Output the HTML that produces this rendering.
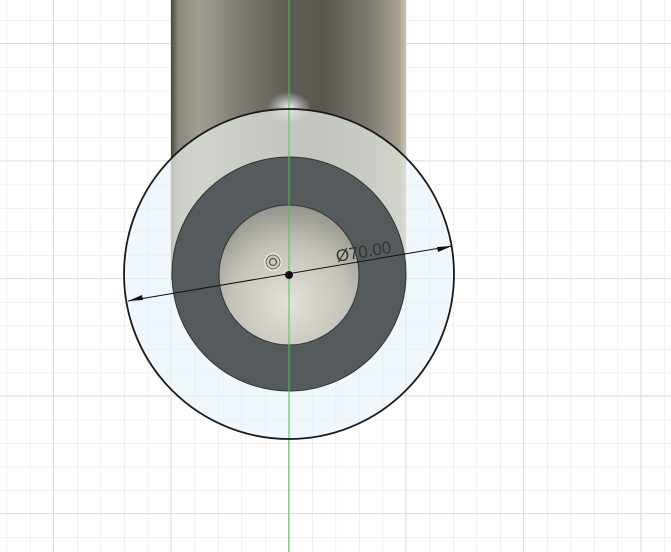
<!DOCTYPE html>
<html><head><style>html,body{margin:0;padding:0;background:#fff;overflow:hidden}</style></head>
<body>
<svg width="671" height="552" viewBox="0 0 671 552" xmlns="http://www.w3.org/2000/svg" style="display:block">
<defs>
<pattern id="minor" width="23.5" height="23.5" patternUnits="userSpaceOnUse" x="6.5" y="-3.5">
<path d="M0 0H23.5M0 0V23.5" stroke="#e8e8e8" stroke-width="1.3" fill="none"/>
</pattern>
<pattern id="major" width="117.5" height="117.5" patternUnits="userSpaceOnUse" x="53" y="43">
<path d="M0 0H117.5M0 0V117.5" stroke="#d2d2d2" stroke-width="1" fill="none"/>
</pattern>
<linearGradient id="cyl" x1="0" x2="1" y1="0" y2="0">
<stop offset="0" stop-color="#4a4740"/>
<stop offset="0.03" stop-color="#8a867c"/>
<stop offset="0.12" stop-color="#a29e94"/>
<stop offset="0.3" stop-color="#7e7a72"/>
<stop offset="0.5" stop-color="#5e5b55"/>
<stop offset="0.65" stop-color="#5a5650"/>
<stop offset="0.85" stop-color="#7e7b72"/>
<stop offset="0.97" stop-color="#a8a292"/>
<stop offset="1" stop-color="#c8c2b0"/>
</linearGradient>
<radialGradient id="hl" cx="0.5" cy="0.5" r="0.5">
<stop offset="0" stop-color="#ffffff" stop-opacity="0.9"/>
<stop offset="1" stop-color="#ffffff" stop-opacity="0"/>
</radialGradient>
<radialGradient id="inner" cx="0.5" cy="0.7" r="0.7">
<stop offset="0" stop-color="#e4e2d8"/>
<stop offset="0.6" stop-color="#c4c2b8"/>
<stop offset="1" stop-color="#94948c"/>
</radialGradient>
<clipPath id="oc"><circle cx="289" cy="274" r="165"/></clipPath>
</defs>
<rect width="671" height="552" fill="url(#minor)"/>
<rect width="671" height="552" fill="url(#major)"/>
<rect x="171" y="0" width="235" height="280" fill="url(#cyl)"/>
<ellipse cx="289" cy="108" rx="22" ry="16" fill="url(#hl)"/>
<circle cx="289" cy="274" r="165" fill="#e6f1fb" fill-opacity="0.6"/>
<g clip-path="url(#oc)">
<rect x="171" y="109" width="235" height="170" fill="#d8d8c8" fill-opacity="0.5"/>
</g>
<circle cx="289" cy="274" r="117" fill="#555b5c" stroke="#333" stroke-width="1"/>
<circle cx="289" cy="275" r="70" fill="url(#inner)" stroke="#333" stroke-width="1"/>
<line x1="289" y1="0" x2="289" y2="552" stroke="#3ad04a" stroke-width="1"/>
<circle cx="289" cy="274" r="165" fill="none" stroke="#1a1a1a" stroke-width="1.8"/>
<line x1="128" y1="301" x2="452" y2="246" stroke="#111" stroke-width="1"/>
<path d="M128 301 L142 295 L143 300 Z" fill="#111"/>
<path d="M452 246 L438 252 L437 247 Z" fill="#111"/>
<circle cx="289" cy="275" r="4" fill="#111"/>
<circle cx="273" cy="262" r="8" fill="none" stroke="#eee" stroke-width="1.5"/>
<circle cx="273" cy="262" r="7" fill="none" stroke="#666" stroke-width="1"/>
<circle cx="273" cy="262" r="3.5" fill="none" stroke="#555" stroke-width="1.2"/>
<text x="337" y="262" transform="rotate(-9.6 337 262)" font-family="Liberation Sans, sans-serif" font-size="17" fill="#333">Ø70.00</text>
</svg>
</body></html>
